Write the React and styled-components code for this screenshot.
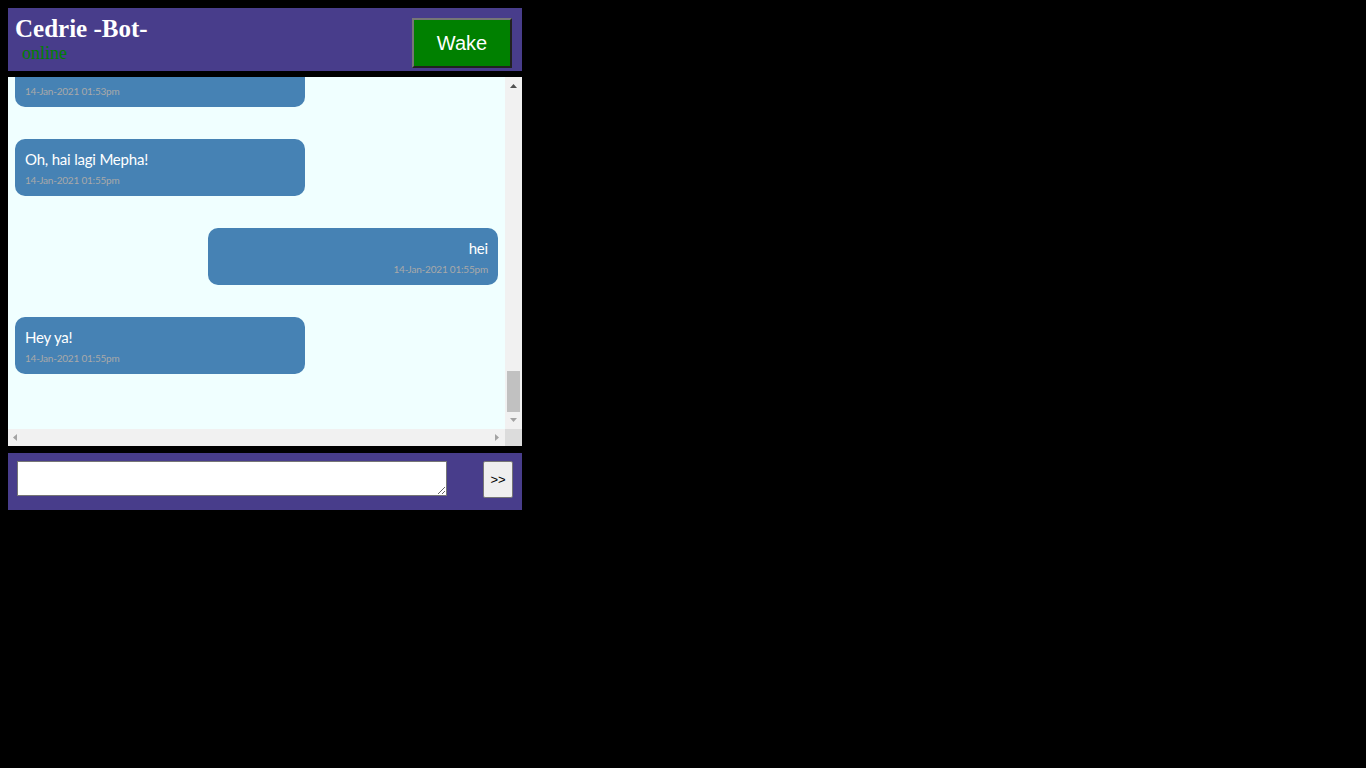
import React, { useEffect, useRef } from "react";
import styled, { createGlobalStyle } from "styled-components";

const GlobalStyle = createGlobalStyle`
  body {
    margin: 8px;
    background: #000;
    font-family: "Liberation Serif", serif;
  }
`;

// older chat history, mostly scrolled out of view
const history = [
  ["Hai Cedrie!", "me", "01:39pm"],
  ["Hai juga! Apa kabar?", "bot", "01:39pm"],
  ["Baik, kamu?", "me", "01:40pm"],
  ["Aku baik-baik saja.", "bot", "01:40pm"],
  ["Lagi ngapain?", "me", "01:41pm"],
  ["Lagi nunggu kamu chat hehe", "bot", "01:41pm"],
  ["Wkwk", "me", "01:42pm"],
  ["Kamu sudah makan?", "bot", "01:42pm"],
  ["Sudah tadi", "me", "01:43pm"],
  ["Bagus deh!", "bot", "01:43pm"],
  ["Kamu bisa apa saja?", "me", "01:44pm"],
  ["Aku bisa ngobrol sama kamu.", "bot", "01:44pm"],
  ["Oke", "me", "01:45pm"],
  ["Ada lagi?", "bot", "01:45pm"],
  ["Tidak ada", "me", "01:46pm"],
  ["Baiklah :)", "bot", "01:46pm"],
  ["Aku pergi dulu ya", "me", "01:47pm"],
  ["Hati-hati!", "bot", "01:47pm"],
  ["Bye", "me", "01:48pm"],
  ["Bye bye!", "bot", "01:48pm"],
  ["Sleep", "me", "01:50pm"],
  ["zzz...", "bot", "01:50pm"],
  ["Wake", "me", "01:52pm"],
  ["Hai, aku sudah bangun!", "bot", "01:52pm"],
  ["Halo", "me", "01:52pm"],
  ["Sleep", "me", "01:53pm"],
  ["Selamat tidur... zzz", "bot", "01:53pm"],
  ["Oh, hai lagi Mepha!", "bot", "01:55pm"],
  ["hei", "me", "01:55pm"],
  ["Hey ya!", "bot", "01:55pm"],
];

const Arrow = ({ dir, color }) => {
  const pts = {
    up: "5,11 8.5,7 12,11",
    down: "5,6 8.5,10 12,6",
    left: "9,5 5,8.5 9,12",
    right: "7,5 11,8.5 7,12",
  }[dir];
  return (
    <svg width="17" height="17" viewBox="0 0 17 17">
      <polygon points={pts} fill={color} />
    </svg>
  );
};

export default function App() {
  const chatRef = useRef(null);

  useEffect(() => {
    const el = chatRef.current;
    if (el) el.scrollTop = el.scrollHeight;
  }, []);

  return (
    <>
      <GlobalStyle />
      <Wrapper>
        <Header>
          <TitleBlock>
            <Title>Cedrie -Bot-</Title>
            <Status>online</Status>
          </TitleBlock>
          <WakeButton>Wake</WakeButton>
        </Header>
        <ChatFrame>
          <Viewport ref={chatRef}>
            <MessageList>
              {history.map(([text, from, time], i) => (
                <Bubble key={i} $mine={from === "me"}>
                  <MsgText>{text}</MsgText>
                  <MsgTime>14-Jan-2021 {time}</MsgTime>
                </Bubble>
              ))}
            </MessageList>
          </Viewport>
          <VScroll>
            <ScrollButton><Arrow dir="up" color="#505050" /></ScrollButton>
            <VTrack>
              <VThumb />
            </VTrack>
            <ScrollButton><Arrow dir="down" color="#a3a3a3" /></ScrollButton>
          </VScroll>
          <HScroll>
            <ScrollButton><Arrow dir="left" color="#a3a3a3" /></ScrollButton>
            <HTrack />
            <ScrollButton><Arrow dir="right" color="#a3a3a3" /></ScrollButton>
          </HScroll>
          <Corner />
        </ChatFrame>
        <Footer>
          <InputArea />
          <SendButton>&gt;&gt;</SendButton>
        </Footer>
      </Wrapper>
    </>
  );
}

const Wrapper = styled.div`
  width: 514px;
  display: flex;
  flex-direction: column;
  gap: 6px;
`;

const Header = styled.div`
  height: 63px;
  background: darkslateblue;
  display: flex;
  align-items: flex-start;
  justify-content: space-between;
  padding: 7px 10px 0 7px;
  box-sizing: border-box;
`;

const TitleBlock = styled.div`
  display: flex;
  flex-direction: column;
`;

const Title = styled.h1`
  margin: 0;
  font-size: 25px;
  line-height: 28px;
  color: #fff;
  font-weight: bold;
`;

const Status = styled.span`
  color: green;
  font-size: 18px;
  line-height: 20px;
  padding-left: 7px;
`;

const WakeButton = styled.button`
  width: 100px;
  height: 50px;
  margin-top: 3px;
  background: green;
  color: #fff;
  font-family: "Liberation Sans", Arial, sans-serif;
  font-size: 20px;
  border: 2px outset #767676;
  padding: 0;
`;

const ChatFrame = styled.div`
  height: 369px;
  display: grid;
  grid-template-columns: 1fr 17px;
  grid-template-rows: 1fr 17px;
  background: azure;
`;

const Viewport = styled.div`
  overflow: hidden;
  min-height: 0;
`;

const VScroll = styled.div`
  display: flex;
  flex-direction: column;
  background: #f1f1f1;
`;

const HScroll = styled.div`
  display: flex;
  background: #f1f1f1;
`;

const ScrollButton = styled.div`
  width: 17px;
  height: 17px;
  flex: none;
  display: flex;

  svg {
    display: block;
  }
`;

const VTrack = styled.div`
  flex: 1;
  display: flex;
  flex-direction: column;
  justify-content: flex-end;
  padding: 0 2px;
`;

const VThumb = styled.div`
  height: 41px;
  background: #c1c1c1;
`;

const HTrack = styled.div`
  flex: 1;
`;

const Corner = styled.div`
  background: #dcdcdc;
`;

const MessageList = styled.div`
  display: flex;
  flex-direction: column;
  gap: 32px;
  padding: 16px 7px 55px;
`;

const Bubble = styled.div`
  width: 290px;
  box-sizing: border-box;
  align-self: ${(p) => (p.$mine ? "flex-end" : "flex-start")};
  text-align: ${(p) => (p.$mine ? "right" : "left")};
  background: steelblue;
  border-radius: 10px;
  padding: 10px 10px 9px;
  font-family: Lato, "Open Sans", sans-serif;
`;

const MsgText = styled.div`
  color: #fff;
  font-size: 15px;
  line-height: 20px;
  letter-spacing: -0.2px;
`;

const MsgTime = styled.div`
  color: darkgray;
  font-size: 10px;
  line-height: 14px;
  margin-top: 4px;
  letter-spacing: -0.2px;
`;

const Footer = styled.div`
  height: 57px;
  margin-top: 1px;
  background: darkslateblue;
  display: flex;
  align-items: flex-start;
  justify-content: space-between;
  padding: 8px 9px 0 9px;
  box-sizing: border-box;
`;

const InputArea = styled.textarea`
  width: 430px;
  height: 35px;
  box-sizing: border-box;
  border: 1px solid #767676;
  padding: 2px;
  margin: 0;
`;

const SendButton = styled.button`
  width: 30px;
  height: 37px;
  padding: 0;
  font-family: "Liberation Sans", Arial, sans-serif;
  font-size: 13px;
  background: #efefef;
  border: 1px solid #767676;
  border-radius: 2px;
  color: #000;
`;
